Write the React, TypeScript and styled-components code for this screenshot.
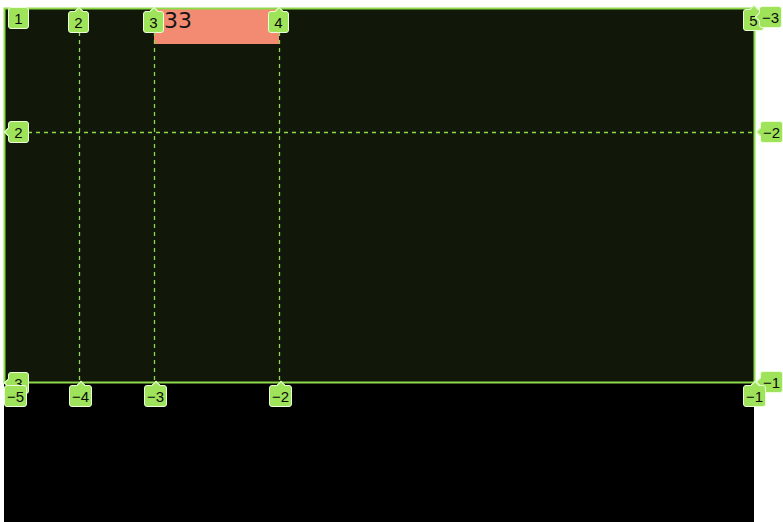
import React from "react";
import styled, { createGlobalStyle, css } from "styled-components";

const Global = createGlobalStyle`
  html, body { margin: 0; padding: 0; background: #ffffff; overflow: hidden; }
`;

const Page = styled.div`
  padding: 8px 0 0 4px;
`;

const Box = styled.div`
  position: relative;
  width: 750px;
  height: 520px;
  background: #000000;
`;

const Grid = styled.div`
  display: grid;
  grid-template-columns: 75px 75px 125px 1fr;
  grid-template-rows: 124px 250px;
  height: 374px;
  background: #11180a;
`;

const Item = styled.div<{ $col: number; $row: number }>`
  grid-column: ${(p) => p.$col};
  grid-row: ${(p) => p.$row};
  align-self: start;
  height: 36px;
  background: #f28b71;
  color: #151515;
  font-family: "DejaVu Sans", sans-serif;
  font-size: 22px;
  line-height: 26px;
  padding-left: 10px;
`;

const Overlay = styled.svg`
  position: absolute;
  left: 0;
  top: 0;
  overflow: visible;
  pointer-events: none;
`;

type Arrow = "top" | "left" | "none";

const arrowCss = {
  top: css`
    left: 50%;
    top: -4px;
    transform: translateX(-50%) rotate(45deg);
  `,
  left: css`
    top: 50%;
    left: -4px;
    transform: translateY(-50%) rotate(-45deg);
  `,
  none: css`
    display: none;
  `,
};

const Badge = styled.div<{ $x: number; $y: number; $arrow: Arrow }>`
  position: absolute;
  left: ${(p) => p.$x}px;
  top: ${(p) => p.$y}px;
  box-sizing: border-box;
  min-width: 21px;
  height: 22px;
  padding: 0 2px;
  display: flex;
  align-items: center;
  justify-content: center;
  background: #9fe35a;
  border: 1px solid #eaffd8;
  border-radius: 3px;
  color: #0c0c0c;
  font-family: "Liberation Sans", sans-serif;
  font-size: 15px;
  &::before {
    content: "";
    position: absolute;
    width: 5px;
    height: 5px;
    background: #9fe35a;
    border-left: 1px solid #eaffd8;
    border-top: 1px solid #eaffd8;
    ${(p) => arrowCss[p.$arrow]}
  }
`;

type L = { x: number; y: number; a: Arrow; t: string };

const labels: L[] = [
  { x: 4, y: -1, a: "none", t: "1" },
  { x: 64, y: 3, a: "top", t: "2" },
  { x: 139, y: 3, a: "top", t: "3" },
  { x: 264, y: 3, a: "top", t: "4" },
  { x: 739, y: 1, a: "top", t: "5" },
  { x: 4, y: 113, a: "left", t: "2" },
  { x: 4, y: 364, a: "left", t: "3" },
  { x: 755, y: -2, a: "left", t: "−3" },
  { x: 756, y: 113, a: "left", t: "−2" },
  { x: 756, y: 363, a: "left", t: "−1" },
  { x: 0, y: 377, a: "none", t: "−5" },
  { x: 65, y: 377, a: "top", t: "−4" },
  { x: 140, y: 377, a: "top", t: "−3" },
  { x: 265, y: 377, a: "top", t: "−2" },
  { x: 739, y: 377, a: "top", t: "−1" },
];

const innerCols = [75.5, 150.5, 275.5];
const GREEN = "#8fd94a";

export default function App() {
  return (
    <>
      <Global />
      <Page>
        <Box>
          <Grid>
            <Item $col={3} $row={1}>33</Item>
          </Grid>
          <Overlay width="751" height="376">
            {innerCols.map((x) => (
              <line key={x} x1={x} y1={0} x2={x} y2={374} stroke={GREEN} strokeWidth="1.3" strokeDasharray="4 4" />
            ))}
            <line x1={0} y1={124.5} x2={750} y2={124.5} stroke={GREEN} strokeWidth="1.3" strokeDasharray="4 4" />
            <rect x="0.5" y="0.5" width="750" height="374" fill="none" stroke={GREEN} strokeWidth="2" />
          </Overlay>
          {labels.map((l, i) => (
            <Badge key={i} $x={l.x} $y={l.y} $arrow={l.a}>
              {l.t}
            </Badge>
          ))}
        </Box>
      </Page>
    </>
  );
}
